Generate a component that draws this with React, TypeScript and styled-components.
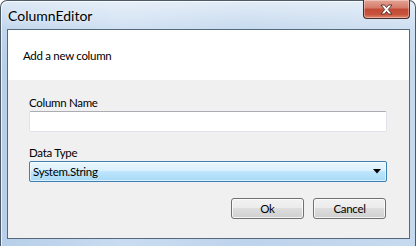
import React from "react";
import styled, { createGlobalStyle } from "styled-components";

const Global = createGlobalStyle`
  html, body { margin: 0; padding: 0; background: #ffffff; }
  body { font-family: Lato, "Noto Sans", sans-serif; }
  * { box-sizing: border-box; }
`;

const Window = styled.div`
  width: 416px;
  height: 246px;
  border: 1px solid #4d5a68;
  border-bottom: none;
  border-radius: 7px 7px 0 0;
  background:
    linear-gradient(180deg, rgba(255,255,255,0.55) 0px, rgba(255,255,255,0.15) 28px, rgba(255,255,255,0) 60px),
    linear-gradient(90deg, #b7cfe9 0%, #c9dcf1 30%, #bed4ec 60%, #c6daef 100%);
  display: flex;
  flex-direction: column;
  padding: 0 5px 7px 6px;
  box-shadow: inset 1px 1px 0 rgba(255,255,255,0.7);
`;

const TitleBar = styled.div`
  height: 28px;
  display: flex;
  align-items: flex-start;
  justify-content: space-between;
  padding-left: 1px;
`;

const Title = styled.span`
  font-family: Lato, "Noto Sans", sans-serif;
  font-size: 14px;
  line-height: 16px;
  margin-top: 7px;
  color: #000;
  text-shadow: 0 0 6px rgba(255,255,255,0.9);
`;

const CloseButton = styled.div`
  width: 47px;
  height: 19px;
  margin-top: -1px;
  border: 1px solid #4a2a26;
  border-top: none;
  border-radius: 0 0 4px 4px;
  background: linear-gradient(180deg, #e4a394 0%, #d47a68 45%, #c14a36 50%, #c9533c 80%, #dc8a6e 100%);
  box-shadow: inset 0 0 0 1px rgba(255,255,255,0.35);
  display: flex;
  align-items: center;
  justify-content: center;
`;

const Client = styled.div`
  flex: 1;
  border: 1px solid #56687c;
  background: #f0f0f0;
  display: flex;
  flex-direction: column;
  font-size: 11.5px;
  letter-spacing: -0.3px;
  color: #000;
`;

const Header = styled.div`
  height: 50px;
  background: #ffffff;
  display: flex;
  align-items: center;
  padding-left: 15px;
`;

const Body = styled.div`
  padding: 15px 22px 0 21px;
  display: flex;
  flex-direction: column;
`;

const Label = styled.div<{ $top?: number }>`
  line-height: 15px;
  height: 15px;
  margin-top: ${(p) => p.$top ?? 0}px;
`;

const TextBox = styled.div`
  margin-top: 1px;
  height: 21px;
  background: #fff;
  border: 1px solid #e2e3ea;
  border-top-color: #abadb3;
  border-radius: 2px;
`;

const Combo = styled.div`
  margin-top: 1px;
  height: 21px;
  border: 1px solid #3c7fb1;
  border-radius: 2px;
  background: linear-gradient(180deg, #eaf6fd 0%, #d9f0fc 49%, #bee6fd 50%, #a7d9f5 100%);
  box-shadow: inset 0 0 0 1px rgba(255,255,255,0.6);
  display: flex;
  align-items: center;
  justify-content: space-between;
  padding: 0 5px 0 3px;
`;

const Buttons = styled.div`
  margin-top: 16px;
  display: flex;
  justify-content: flex-end;
  gap: 9px;
  padding-right: 1px;
`;

const Button = styled.div`
  width: 73px;
  height: 21px;
  border: 1px solid #707070;
  border-radius: 3px;
  background: linear-gradient(180deg, #f2f2f2 0%, #ebebeb 49%, #dddddd 50%, #cfcfcf 100%);
  box-shadow: inset 0 0 0 1px rgba(255,255,255,0.75);
  display: flex;
  align-items: center;
  justify-content: center;
`;

export default function App() {
  return (
    <>
      <Global />
      <Window>
        <TitleBar>
          <Title>ColumnEditor</Title>
          <CloseButton>
            <svg width="13" height="11" viewBox="0 0 13 11">
              <path
                d="M1 1 L4.5 1 L6.5 3.5 L8.5 1 L12 1 L8.3 5.5 L12 10 L8.5 10 L6.5 7.5 L4.5 10 L1 10 L4.7 5.5 Z"
                fill="#ffffff"
                stroke="#4a2a26"
                strokeWidth="0.9"
                strokeLinejoin="round"
              />
            </svg>
          </CloseButton>
        </TitleBar>
        <Client>
          <Header>Add a new column</Header>
          <Body>
            <Label>Column Name</Label>
            <TextBox />
            <Label $top={13}>Data Type</Label>
            <Combo>
              <span>System.String</span>
              <svg width="8" height="5" viewBox="0 0 8 5">
                <path d="M0 0 L8 0 L4 4.5 Z" fill="#000" />
              </svg>
            </Combo>
            <Buttons>
              <Button>Ok</Button>
              <Button>Cancel</Button>
            </Buttons>
          </Body>
        </Client>
      </Window>
    </>
  );
}
